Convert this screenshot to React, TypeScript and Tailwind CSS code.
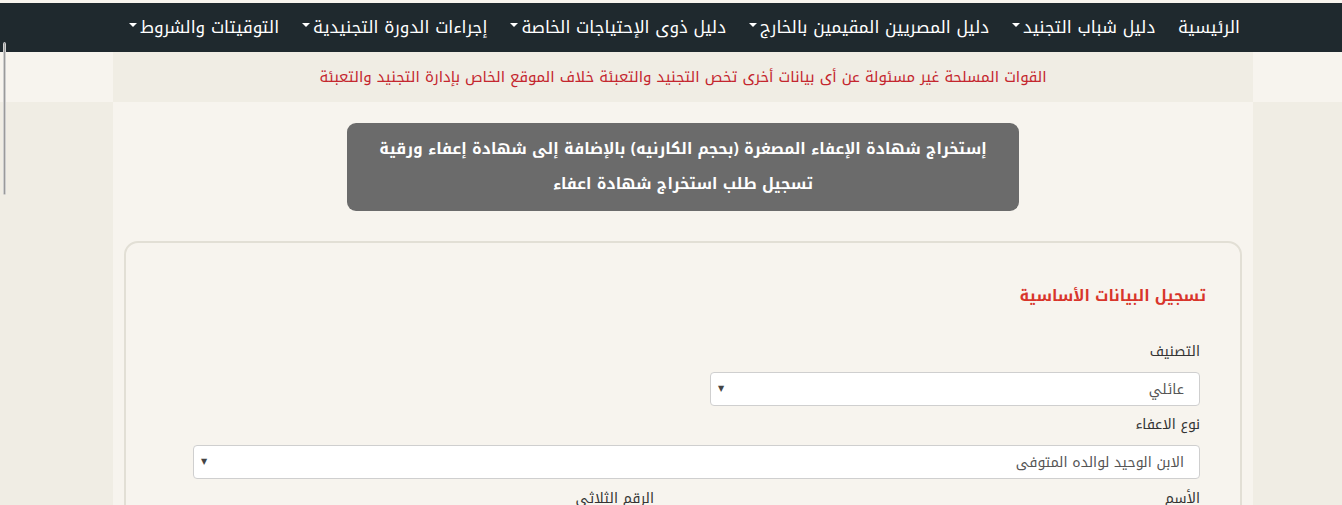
const navItems = [
  { label: "الرئيسية", caret: false },
  { label: "دليل شباب التجنيد", caret: true },
  { label: "دليل المصريين المقيمين بالخارج", caret: true },
  { label: "دليل ذوى الإحتياجات الخاصة", caret: true },
  { label: "إجراءات الدورة التجنيدية", caret: true },
  { label: "التوقيتات والشروط", caret: true },
];

const arabic =
  "font-['Droid_Arabic_Kufi','Noto_Kufi_Arabic','Noto_Sans_Arabic','DejaVu_Sans',sans-serif]";

function Caret() {
  return (
    <span className="inline-block w-0 h-0 border-x-[4px] border-x-transparent border-t-[4px] border-t-white mr-[3px] -translate-y-[3px]" />
  );
}

function SelectBox({ value, className }: { value: string; className: string }) {
  return (
    <div
      className={`h-[34px] bg-white border border-[#cfcfcf] rounded-[4px] flex items-center justify-between pr-[15px] pl-[7px] ${className}`}
    >
      <span className="text-[14px] text-[#555]">{value}</span>
      <span className="text-[8px] text-[#444] leading-none">▼</span>
    </div>
  );
}

export default function App() {
  return (
    <div dir="rtl" className={`relative min-h-screen bg-[#f0ede4] ${arabic}`}>

      {/* top strip */}
      <div className="h-[3px] bg-[#f7f4ee]" />

      {/* Navbar */}
      <nav className="h-[49px] bg-[#1f292e] flex items-center gap-[23px] pr-[102px]">
        {navItems.map((item) => (
          <a
            key={item.label}
            className="text-white text-[17px] whitespace-nowrap flex items-center"
          >
            {item.label}
            {item.caret && <Caret />}
          </a>
        ))}
      </nav>

      {/* Warning */}
      <div className="bg-[#f7f4ee]" dir="ltr">
        <div
          dir="rtl"
          className="ml-[113px] w-[1140px] h-[50px] bg-[#f0ede4] flex items-center justify-center"
        >
          <p className="text-[#c4262e] text-[15px]">
            القوات المسلحة غير مسئولة عن أى بيانات أخرى تخص التجنيد والتعبئة
            خلاف الموقع الخاص بإدارة التجنيد والتعبئة
          </p>
        </div>
      </div>

      {/* Main */}
      <div dir="ltr">
        <div
          dir="rtl"
          className="ml-[113px] w-[1140px] bg-[#f7f4ee] pt-[21px] px-[11px] pb-10"
        >
          <div className="mx-auto w-[672px] h-[88px] bg-[#6b6b6b] rounded-[9px] flex flex-col items-center justify-center text-white font-bold text-[15.5px] leading-[35px]">
            <p>
              إستخراج شهادة الإعفاء المصغرة (بحجم الكارنيه) بالإضافة إلى شهادة
              إعفاء ورقية
            </p>
            <p>تسجيل طلب استخراج شهادة اعفاء</p>
          </div>

          {/* Card */}
          <div className="mt-[30px] border-2 border-[#e2dfd5] rounded-[14px] bg-[#f7f4ee] pt-[40px] pr-[34px] pl-[67px] pb-10">
            <h2 className="text-[#d8352b] font-bold text-[15.5px] leading-[27px]">
              تسجيل البيانات الأساسية
            </h2>

            <div className="pr-[6px] mt-[32px]">
              <label className="block text-[14px] text-[#333] leading-[20px]">
                التصنيف
              </label>
              <SelectBox value="عائلي" className="mt-[10px] w-[490px]" />

              <label className="block text-[14px] text-[#333] leading-[20px] mt-[9px]">
                نوع الاعفاء
              </label>
              <SelectBox
                value="الابن الوحيد لوالده المتوفى"
                className="mt-[10px] w-full"
              />

              <div className="grid grid-cols-[490px_490px] gap-[56px] mt-[10px]">
                <label className="block text-[14px] text-[#333] leading-[20px]">
                  الأسم
                </label>
                <label className="block text-[14px] text-[#333] leading-[20px]">
                  الرقم الثلاثي
                </label>
              </div>
            </div>
          </div>
        </div>
      </div>

      {/* scrollbar sliver */}
      <div className="absolute left-[3px] top-[42px] w-[3px] h-[153px] bg-[#9a9a9a] rounded-full border border-[#cfcfcf]" />
    </div>
  );
}
